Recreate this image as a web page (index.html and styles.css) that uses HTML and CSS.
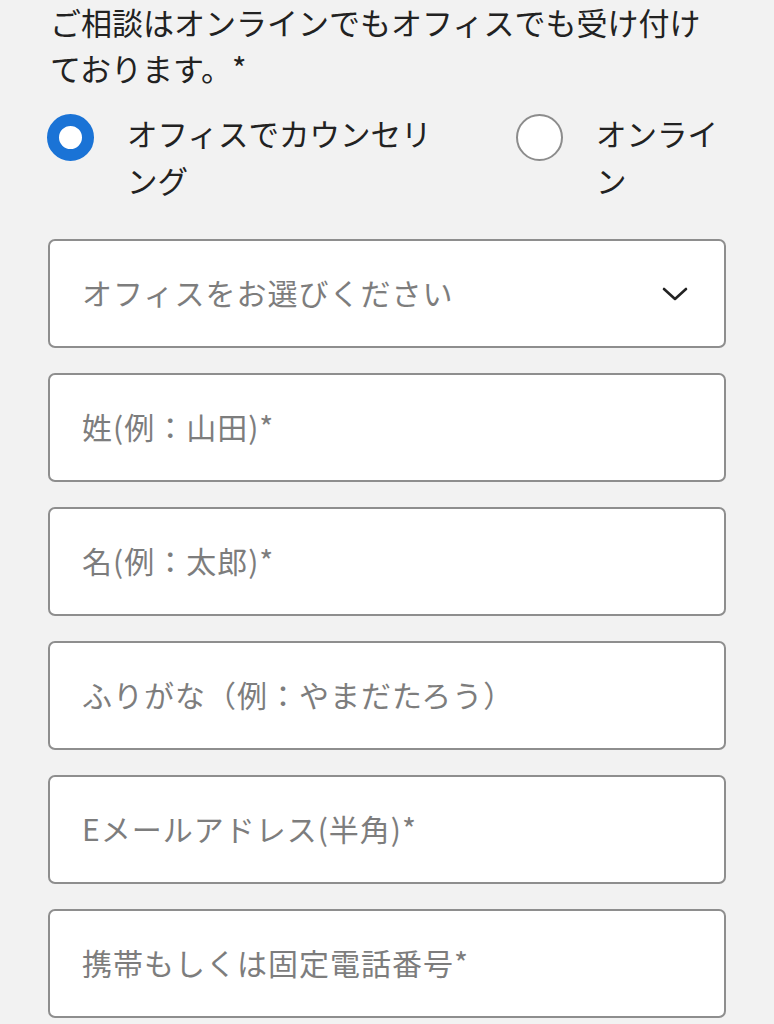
FILE: index.html
```html
<!DOCTYPE html>
<html lang="ja">
<head>
<meta charset="utf-8">
<title>ご相談フォーム</title>
<link rel="stylesheet" href="styles.css">
</head>
<body>
<form class="form">
  <p class="question">ご相談はオンラインでもオフィスでも受け付けております。*</p>
  <div class="radios">
    <label class="option option-first">
      <span class="radio radio-checked"></span>
      <span class="option-label">オフィスでカウンセリング</span>
    </label>
    <label class="option">
      <span class="radio"></span>
      <span class="option-label option-label-narrow">オンライン</span>
    </label>
  </div>
  <div class="field field-select">
    <span class="placeholder">オフィスをお選びください</span>
    <svg class="chevron" width="26" height="16" viewBox="0 0 26 16" aria-hidden="true">
      <path d="M2 3 L13 13 L24 3" fill="none" stroke="#222" stroke-width="2.6" stroke-linecap="round" stroke-linejoin="round"/>
    </svg>
  </div>
  <input class="field" type="text" placeholder="姓(例：山田)*">
  <input class="field" type="text" placeholder="名(例：太郎)*">
  <input class="field" type="text" placeholder="ふりがな（例：やまだたろう）">
  <input class="field" type="email" placeholder="Eメールアドレス(半角)*">
  <input class="field" type="tel" placeholder="携帯もしくは固定電話番号*">
</form>
</body>
</html>
```
FILE: styles.css
```css
html, body {
  margin: 0;
  padding: 0;
  background: #f2f2f2;
}
body {
  font-family: "Noto Sans CJK JP", "Noto Sans", sans-serif;
  color: #222;
}
.form {
  display: flex;
  flex-direction: column;
  padding: 0 48px 0 48px;
  width: 678px;
}
.question {
  margin: -1px 0 0 2px;
  font-size: 31px;
  line-height: 46px;
  color: #222;
}
.radios {
  display: flex;
  margin-top: 19px;
  margin-left: -1px;
}
.option {
  display: flex;
  align-items: flex-start;
}
.option-first {
  width: 470px;
}
.radio {
  flex: none;
  box-sizing: border-box;
  width: 47px;
  height: 47px;
  border-radius: 50%;
  background: #fff;
  border: 2px solid #8c8c8c;
  margin-top: 4px;
}
.radio-checked {
  border: 12.5px solid #1a73d6;
}
.option-label {
  margin-left: 33px;
  width: 320px;
  font-size: 30.5px;
  line-height: 47px;
  color: #222;
}
.option-label-narrow {
  width: 130px;
}
.field {
  box-sizing: border-box;
  display: flex;
  align-items: center;
  justify-content: space-between;
  width: 678px;
  height: 109px;
  margin: 25px 0 0 0;
  padding: 0 32px 4px 32px;
  background: #fff;
  border: 2px solid #8e8e8e;
  border-radius: 7px;
  font-family: "Noto Sans CJK JP", "Noto Sans", sans-serif;
  font-size: 30px;
  letter-spacing: 1px;
  color: #222;
  outline: none;
}
.field-select {
  margin-top: 35px;
}
.placeholder {
  color: #7d7d7d;
}
.field::placeholder {
  color: #7d7d7d;
}
.chevron {
  margin-right: 4px;
  margin-top: 4px;
}
```
